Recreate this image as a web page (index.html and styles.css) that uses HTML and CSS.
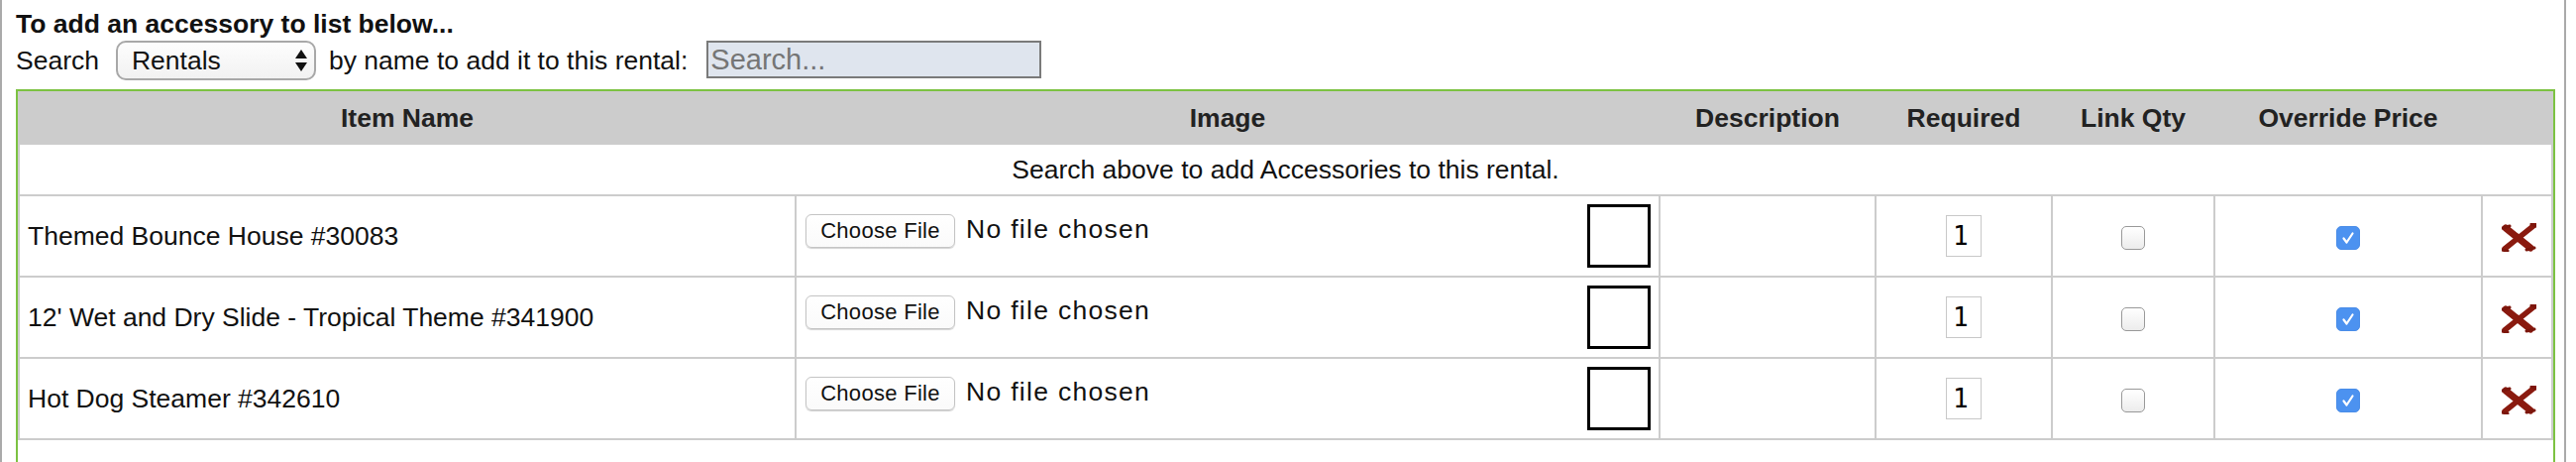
FILE: index.html
```html
<!DOCTYPE html>
<html lang="en">
<head>
    <meta charset="UTF-8">
    <meta name="viewport" content="width=device-width, initial-scale=1.0">
    <title>Rental Accessories</title>
    <link rel="stylesheet" href="styles.css">
</head>
<body>

    <div class="page">
        <h3 class="hint">To add an accessory to list below...</h3>

        <div class="search-row">
            <span class="label">Search</span>
            <span class="select-wrap">
                <select class="type-select" id="searchType">
                    <option>Rentals</option>
                    <option>Products</option>
                </select>
                <svg class="select-arrows" width="12" height="22" viewBox="0 0 12 22">
                    <path d="M6 0 L12 9 L0 9 Z" fill="#111"/>
                    <path d="M0 13 L12 13 L6 22 Z" fill="#111"/>
                </svg>
            </span>
            <span class="label by-name">by name to add it to this rental:</span>
            <input class="search-input" type="text" id="accessorySearch" placeholder="Search...">
        </div>

        <div class="accessories">
            <table class="acc-table">
                <thead>
                    <tr>
                        <th class="col-name">Item Name</th>
                        <th class="col-image">Image</th>
                        <th class="col-desc">Description</th>
                        <th class="col-req">Required</th>
                        <th class="col-link">Link Qty</th>
                        <th class="col-price">Override Price</th>
                        <th class="col-del"></th>
                    </tr>
                </thead>
                <tbody>
                    <tr>
                        <td class="notice" colspan="7">Search above to add Accessories to this rental.</td>
                    </tr>
                    <tr>
                        <td>Themed Bounce House #30083</td>
                        <td>
                            <div class="image-cell">
                                <span class="file-pick">
                                    <button class="choose-file">Choose File</button>
                                    <span class="no-file">No file chosen</span>
                                </span>
                                <span class="thumb"></span>
                            </div>
                        </td>
                        <td></td>
                        <td class="center"><input class="qty" type="text" value="1"></td>
                        <td class="center"><span class="check"></span></td>
                        <td class="center">
                            <span class="check checked">
                                <svg width="24" height="24" viewBox="0 0 24 24"><path d="M7.5 12.5 L10.5 16.5 L16.5 7.5" fill="none" stroke="#fff" stroke-width="2.2" stroke-linecap="round" stroke-linejoin="round"/></svg>
                            </span>
                        </td>
                        <td class="center">
                            <a class="remove" href="#" title="Remove">
                                <svg width="35" height="29" viewBox="0 0 35 29">
                                    <path d="M4 5 L29 25" stroke="#8a1a0f" stroke-width="7" stroke-linecap="round"/>
                                    <path d="M33 2 L3 26" stroke="#8a1a0f" stroke-width="5.5" stroke-linecap="round"/>
                                    <path d="M1 5 L8 3 M25 27 L33 25 M30 1 L35 3 M0 27 L6 28" stroke="#7c160c" stroke-width="3" stroke-linecap="round"/>
                                </svg>
                            </a>
                        </td>
                    </tr>
                    <tr>
                        <td>12' Wet and Dry Slide - Tropical Theme #341900</td>
                        <td>
                            <div class="image-cell">
                                <span class="file-pick">
                                    <button class="choose-file">Choose File</button>
                                    <span class="no-file">No file chosen</span>
                                </span>
                                <span class="thumb"></span>
                            </div>
                        </td>
                        <td></td>
                        <td class="center"><input class="qty" type="text" value="1"></td>
                        <td class="center"><span class="check"></span></td>
                        <td class="center">
                            <span class="check checked">
                                <svg width="24" height="24" viewBox="0 0 24 24"><path d="M7.5 12.5 L10.5 16.5 L16.5 7.5" fill="none" stroke="#fff" stroke-width="2.2" stroke-linecap="round" stroke-linejoin="round"/></svg>
                            </span>
                        </td>
                        <td class="center">
                            <a class="remove" href="#" title="Remove">
                                <svg width="35" height="29" viewBox="0 0 35 29">
                                    <path d="M4 5 L29 25" stroke="#8a1a0f" stroke-width="7" stroke-linecap="round"/>
                                    <path d="M33 2 L3 26" stroke="#8a1a0f" stroke-width="5.5" stroke-linecap="round"/>
                                    <path d="M1 5 L8 3 M25 27 L33 25 M30 1 L35 3 M0 27 L6 28" stroke="#7c160c" stroke-width="3" stroke-linecap="round"/>
                                </svg>
                            </a>
                        </td>
                    </tr>
                    <tr>
                        <td>Hot Dog Steamer #342610</td>
                        <td>
                            <div class="image-cell">
                                <span class="file-pick">
                                    <button class="choose-file">Choose File</button>
                                    <span class="no-file">No file chosen</span>
                                </span>
                                <span class="thumb"></span>
                            </div>
                        </td>
                        <td></td>
                        <td class="center"><input class="qty" type="text" value="1"></td>
                        <td class="center"><span class="check"></span></td>
                        <td class="center">
                            <span class="check checked">
                                <svg width="24" height="24" viewBox="0 0 24 24"><path d="M7.5 12.5 L10.5 16.5 L16.5 7.5" fill="none" stroke="#fff" stroke-width="2.2" stroke-linecap="round" stroke-linejoin="round"/></svg>
                            </span>
                        </td>
                        <td class="center">
                            <a class="remove" href="#" title="Remove">
                                <svg width="35" height="29" viewBox="0 0 35 29">
                                    <path d="M4 5 L29 25" stroke="#8a1a0f" stroke-width="7" stroke-linecap="round"/>
                                    <path d="M33 2 L3 26" stroke="#8a1a0f" stroke-width="5.5" stroke-linecap="round"/>
                                    <path d="M1 5 L8 3 M25 27 L33 25 M30 1 L35 3 M0 27 L6 28" stroke="#7c160c" stroke-width="3" stroke-linecap="round"/>
                                </svg>
                            </a>
                        </td>
                    </tr>
                </tbody>
            </table>
        </div>
    </div>

</body>
</html>
```

FILE: styles.css
```css
/* General */
html, body {
    margin: 0;
    padding: 0;
    height: 466px;
    overflow: hidden;
    background-color: #fff;
}

body {
    font-family: "Liberation Sans", Arial, Helvetica, sans-serif;
    font-size: 26.5px;
    color: #111;
}

.page {
    width: 2563px;
    min-height: 466px;
    padding: 9px 9px 0 14px;
    border-left: 2px solid #aaa;
    border-right: 2px solid #aaa;
}

.hint {
    margin: 0;
    font-size: 26.5px;
    line-height: 30px;
    font-weight: bold;
}

/* Search line */
.search-row {
    display: flex;
    align-items: center;
    height: 40px;
    margin-top: 2px;
}

.label {
    line-height: 30px;
}

.select-wrap {
    position: relative;
    display: inline-block;
    margin-left: 17px;
    height: 40px;
}

.type-select {
    -webkit-appearance: none;
    appearance: none;
    width: 202px;
    height: 40px;
    padding: 0 0 0 14px;
    border: 2px solid #a8a8a8;
    border-radius: 10px;
    background: linear-gradient(#fdfdfd, #f2f2f2);
    font-family: "Liberation Sans", Arial, sans-serif;
    font-size: 26.5px;
    color: #111;
    outline: none;
}

.select-arrows {
    position: absolute;
    top: 9px;
    right: 9px;
    pointer-events: none;
}

.by-name {
    margin-left: 13px;
}

.search-input {
    width: 338px;
    height: 38px;
    margin: 0 0 2px 19px;
    padding: 0 2px;
    box-sizing: border-box;
    border: 2px solid #7a7a7a;
    background-color: #dfe5ee;
    font-family: "Liberation Sans", Arial, sans-serif;
    font-size: 29px;
    color: #111;
    outline: none;
}

.search-input::placeholder {
    color: #757575;
}

/* Accessories table */
.accessories {
    margin-top: 9px;
    border: 2px solid #7cc242;
    padding-bottom: 60px;
}

.acc-table {
    width: 100%;
    table-layout: fixed;
    border-collapse: separate;
    border-spacing: 0;
}

.acc-table th {
    box-sizing: border-box;
    height: 54px;
    padding: 0;
    background-color: #ccc;
    border-left: 2px solid #ccc;
    color: #222;
    font-weight: bold;
    text-align: center;
    vertical-align: middle;
}

.col-name { width: 784px; }
.col-image { width: 872px; }
.col-desc { width: 218px; }
.col-req { width: 178px; }
.col-link { width: 164px; }
.col-price { width: 270px; }
.col-del { width: 73px; }

.acc-table td {
    box-sizing: border-box;
    padding: 8px;
    border-left: 2px solid #ccc;
    border-bottom: 2px solid #ccc;
    vertical-align: middle;
    line-height: 30px;
}

.acc-table td:last-child {
    border-right: 2px solid #ccc;
}

.acc-table td.notice {
    padding: 10px 0;
    text-align: center;
}

.acc-table td.center {
    text-align: center;
    padding: 8px 0;
}

/* Image column */
.image-cell {
    display: flex;
    justify-content: space-between;
    align-items: flex-start;
}

.file-pick {
    display: flex;
    align-items: baseline;
    margin-top: 10px;
    margin-left: 1px;
}

.choose-file {
    width: 151px;
    height: 34px;
    padding: 0;
    border: 1px solid #c4c4c4;
    border-radius: 6px;
    background: linear-gradient(#fff, #fafafa);
    box-shadow: 0 1px 1px rgba(0, 0, 0, 0.18);
    font-family: "Liberation Sans", Arial, sans-serif;
    font-size: 22px;
    letter-spacing: 0.3px;
    color: #111;
}

.no-file {
    margin-left: 11px;
    font-size: 26.5px;
    letter-spacing: 1.3px;
    color: #111;
}

.thumb {
    display: block;
    width: 64px;
    height: 64px;
    box-sizing: border-box;
    border: 3px solid #000;
}

/* Required qty */
.qty {
    display: inline-block;
    vertical-align: middle;
    width: 36px;
    height: 42px;
    box-sizing: border-box;
    padding: 0 0 0 6px;
    border: 1px solid #c8c8c8;
    font-family: "DejaVu Sans Mono", "Liberation Mono", monospace;
    font-size: 26px;
    color: #000;
    outline: none;
}

/* Checkboxes */
.check {
    display: inline-block;
    vertical-align: middle;
    width: 24px;
    height: 24px;
    box-sizing: border-box;
    border: 1px solid #999;
    border-radius: 5px;
    background: linear-gradient(#fff, #ececec);
}

.check.checked {
    border-color: #4a8de8;
    background: #4c92f0;
}

.check svg {
    display: block;
    margin: -1px;
}

/* Remove */
.remove {
    display: inline-block;
    vertical-align: middle;
    margin-left: 3px;
    line-height: 0;
}
```
